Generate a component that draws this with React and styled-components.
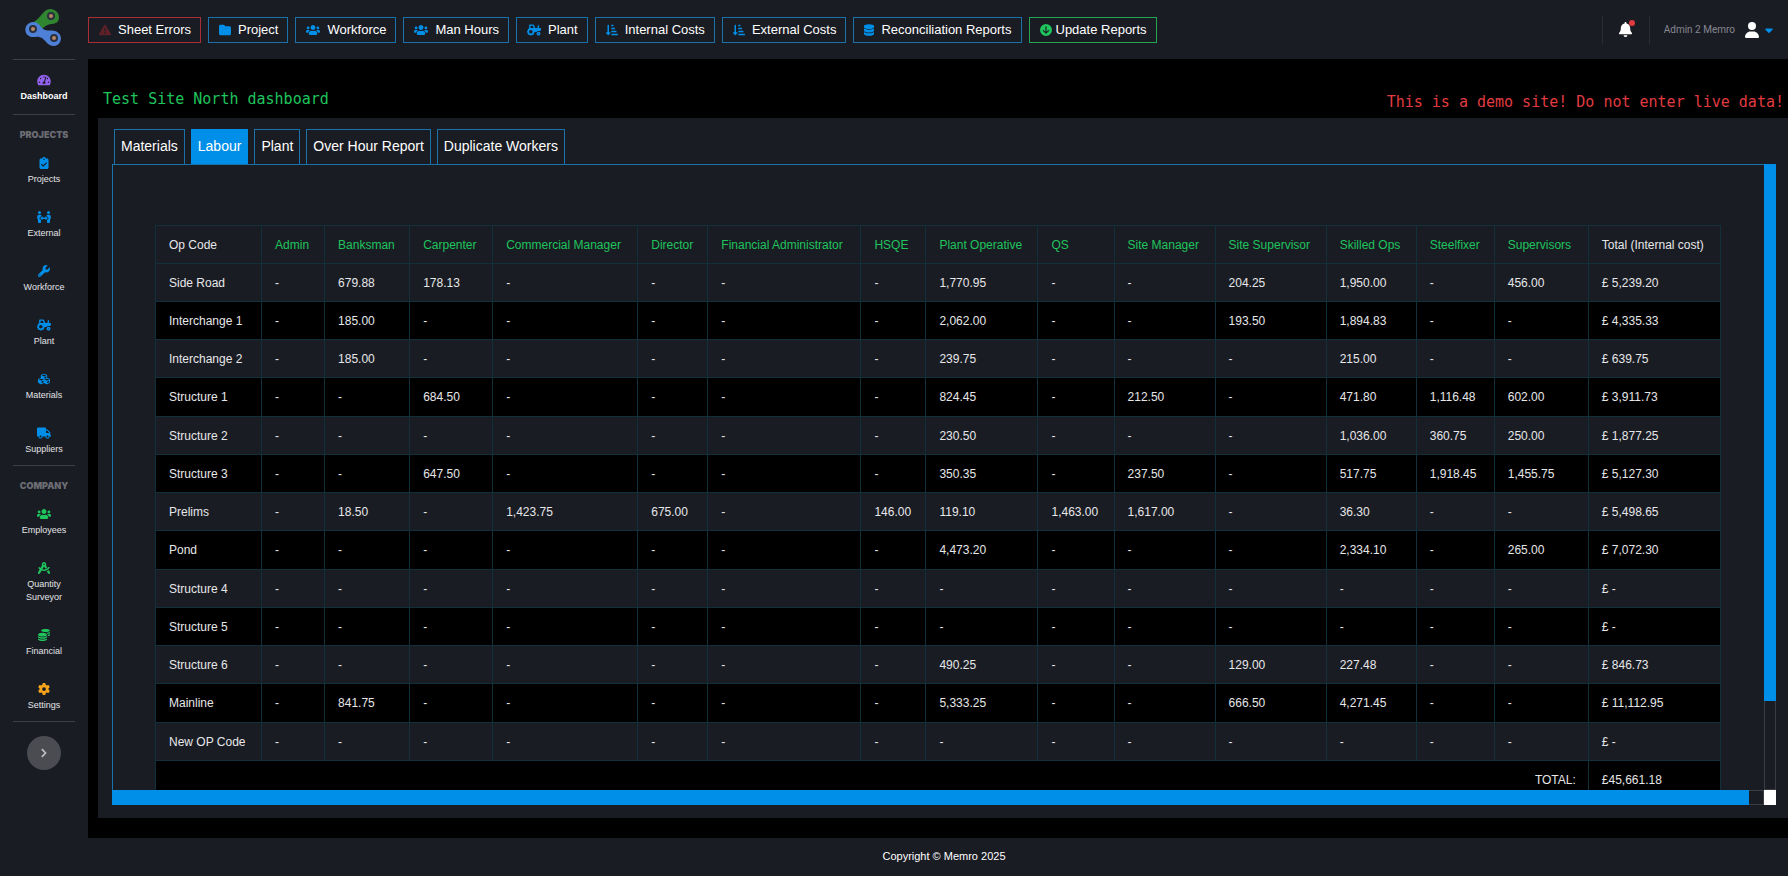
import React from "react";
import styled, { createGlobalStyle } from "styled-components";
import {
  FaTriangleExclamation, FaFolder, FaDatabase, FaCircleArrowDown, FaBell, FaUser, FaCaretDown,
  FaClipboardCheck, FaWrench, FaGear,
} from "react-icons/fa6";
import {
  FaUsers, FaTractor, FaSortAmountDownAlt, FaTachometerAlt, FaPeopleArrows, FaCubes, FaTruck,
  FaDraftingCompass, FaCoins, FaChevronRight,
} from "react-icons/fa";

const c = {
  bg: "#1a1c24",
  blue: "#008fe8",
  line: "#1b72ab",
  green: "#1fc45c",
  red: "#e13b41",
  grid: "#122f3c",
};

const GlobalStyle = createGlobalStyle`
  *, *::before, *::after { box-sizing: border-box; }
  body { margin: 0; background: ${c.bg}; color: #fff; font-family: "Liberation Sans", Arial, sans-serif; }
  a { color: inherit; text-decoration: none; }
  button { font: inherit; color: inherit; cursor: pointer; }
`;

const Shell = styled.div`
  display: flex;
  height: 100vh;
`;

const Sidebar = styled.aside`
  flex: none;
  width: 88px;
  display: flex;
  flex-direction: column;
  align-items: center;
`;

const Logo = styled.a`
  height: 59px;
  padding-top: 8px;
`;

const NavGroup = styled.nav`
  width: 62px;
  border-top: 1px solid #3d3f46;
  padding: ${(p) => p.$pad};
  display: flex;
  flex-direction: column;
  align-items: center;
  gap: 25px;
`;

const NavHeading = styled.h2`
  margin: 0 0 -9px;
  font: 900 9px/12px Inter, sans-serif;
  color: #6c6e74;
`;

const NavLink = styled.a`
  display: flex;
  flex-direction: column;
  align-items: center;
  gap: 4px;
  width: 62px;
  text-align: center;
  font-size: 9px;
  line-height: 13px;
  font-weight: ${(p) => (p.$active ? 700 : 400)};
  color: ${(p) => (p.$active ? "#fff" : "#e3e4e6")};
  svg { width: 14px; height: 12px; color: ${(p) => p.$tone}; }
`;

const Expand = styled.button`
  display: grid;
  place-items: center;
  width: 34px;
  height: 34px;
  margin-top: 14px;
  border: 0;
  border-radius: 50%;
  background: #4a4c52;
  color: #c2c3c6;
  font-size: 10px;
`;

const Column = styled.div`
  flex: 1;
  min-width: 0;
  display: flex;
  flex-direction: column;
`;

const Header = styled.header`
  flex: none;
  height: 59px;
  display: flex;
  align-items: center;
  justify-content: space-between;
  padding-right: 15px;
`;

const Toolbar = styled.div`
  display: flex;
  gap: 7px;
`;

const ToolButton = styled.button`
  display: flex;
  align-items: center;
  gap: ${(p) => p.$gap || 7}px;
  height: 26px;
  padding: 0 9px 0 10px;
  border: 1px solid ${(p) => p.$line || c.line};
  background: transparent;
  font-size: 13px;
  line-height: 16px;
  white-space: nowrap;
  svg { width: ${(p) => p.$icon || 12}px; height: 12px; color: ${(p) => p.$tone || c.blue}; }
`;

const Account = styled.div`
  display: flex;
  align-items: center;
`;

const Alerts = styled.button`
  position: relative;
  display: grid;
  place-items: center;
  width: 48px;
  height: 28px;
  padding: 0;
  border: solid #2b2d35;
  border-width: 0 1px;
  background: none;
  font-size: 15px;
`;

const AlertDot = styled.span`
  position: absolute;
  top: 4px;
  right: 14px;
  width: 6px;
  height: 6px;
  border-radius: 50%;
  background: ${c.red};
`;

const UserMenu = styled.button`
  display: flex;
  align-items: center;
  border: 0;
  background: none;
  padding: 0 0 0 14px;
  font: 10px/16px Roboto, sans-serif;
  color: #858790;
`;

const Avatar = styled(FaUser)`
  width: 14px;
  height: 16px;
  margin: 0 6px 0 10px;
  color: #fff;
`;

const Caret = styled(FaCaretDown)`
  width: 8px;
  height: 12px;
  color: ${c.blue};
`;

const Main = styled.main`
  flex: 1;
  min-height: 0;
  display: flex;
  flex-direction: column;
  background: #000;
  padding: 0 0 20px 10px;
`;

const Titles = styled.div`
  flex: none;
  height: 59px;
  display: flex;
  justify-content: space-between;
  align-items: center;
  padding: 20px 4px 0 5px;
  font: 15px/20px "DejaVu Sans Mono", monospace;
`;

const SiteTitle = styled.h1`
  margin: 0;
  font: inherit;
  color: ${c.green};
`;

const DemoNotice = styled.p`
  margin: 6px 0 0;
  color: ${c.red};
`;

const Panel = styled.section`
  flex: 1;
  min-height: 0;
  display: flex;
  flex-direction: column;
  background: ${c.bg};
  padding: 11px 12px 13px 14px;
`;

const Tabs = styled.div`
  flex: none;
  display: flex;
  gap: 6px;
  padding-left: 2px;
`;

const Tab = styled.button`
  height: 35px;
  padding: 0 6px 2px;
  border: 1px solid ${(p) => (p.$active ? c.blue : c.line)};
  border-bottom: 0;
  background: ${(p) => (p.$active ? c.blue : "transparent")};
  font-size: 14px;
  line-height: 16px;
  white-space: nowrap;
`;

const ScrollFrame = styled.div`
  flex: 1;
  min-height: 0;
  display: grid;
  grid-template: minmax(0, 1fr) 15px / minmax(0, 1fr) 12px;
`;

const ScrollBody = styled.div`
  overflow: auto;
  scrollbar-width: none;
  border: solid ${c.line};
  border-width: 1px 0 0 1px;
  padding: 60px 43px 20px 42px;
`;

const Track = styled.div`
  display: flex;
  flex-direction: ${(p) => (p.$vertical ? "column" : "row")};
  border: 1px solid #3c3d42;
  background: ${c.bg};
`;

const Thumb = styled.div`
  flex: none;
  flex-basis: ${(p) => p.$size};
  margin: -1px;
  background: ${c.blue};
`;

const Corner = styled.div`
  background: #fff;
`;

const Table = styled.table`
  width: 100%;
  table-layout: fixed;
  border-collapse: collapse;
  font-size: 12px;
  line-height: 16px;
  color: #e6e7e9;
  th, td {
    height: 38px;
    padding: 0 12px 0 13px;
    border: 1px solid ${c.grid};
    text-align: left;
    font-weight: 400;
    white-space: nowrap;
  }
  tbody tr:nth-child(even), tfoot tr { background: #000; }
  tbody tr:nth-child(4n) td { height: 39px; }
  tfoot th { text-align: right; }
`;

const HeadCell = styled.th`
  color: ${(p) => (p.$green ? c.green : "#e6e7e9")};
`;

const Footer = styled.footer`
  flex: none;
  height: 38px;
  display: grid;
  place-items: center;
  font-size: 11px;
  line-height: 16px;
  padding: 0 0 2px 12px;
`;

const columns = [
  ["Op Code", 106], ["Admin", 63], ["Banksman", 85], ["Carpenter", 83], ["Commercial Manager", 145],
  ["Director", 70], ["Financial Administrator", 153], ["HSQE", 65], ["Plant Operative", 112],
  ["QS", 76], ["Site Manager", 101], ["Site Supervisor", 111], ["Skilled Ops", 90],
  ["Steelfixer", 78], ["Supervisors", 94], ["Total (Internal cost)", 132],
];

/* Hours keyed by column index; a column without an entry shows a dash. */
const rows = [
  ["Side Road", { 2: "679.88", 3: "178.13", 8: "1,770.95", 11: "204.25", 12: "1,950.00", 14: "456.00" }, "5,239.20"],
  ["Interchange 1", { 2: "185.00", 8: "2,062.00", 11: "193.50", 12: "1,894.83" }, "4,335.33"],
  ["Interchange 2", { 2: "185.00", 8: "239.75", 12: "215.00" }, "639.75"],
  ["Structure 1", { 3: "684.50", 8: "824.45", 10: "212.50", 12: "471.80", 13: "1,116.48", 14: "602.00" }, "3,911.73"],
  ["Structure 2", { 8: "230.50", 12: "1,036.00", 13: "360.75", 14: "250.00" }, "1,877.25"],
  ["Structure 3", { 3: "647.50", 8: "350.35", 10: "237.50", 12: "517.75", 13: "1,918.45", 14: "1,455.75" }, "5,127.30"],
  ["Prelims", { 2: "18.50", 4: "1,423.75", 5: "675.00", 7: "146.00", 8: "119.10", 9: "1,463.00", 10: "1,617.00", 12: "36.30" }, "5,498.65"],
  ["Pond", { 8: "4,473.20", 12: "2,334.10", 14: "265.00" }, "7,072.30"],
  ["Structure 4", {}, "-"],
  ["Structure 5", {}, "-"],
  ["Structure 6", { 8: "490.25", 11: "129.00", 12: "227.48" }, "846.73"],
  ["Mainline", { 2: "841.75", 8: "5,333.25", 11: "666.50", 12: "4,271.45" }, "11,112.95"],
  ["New OP Code", {}, "-"],
];

const tools = [
  { label: "Sheet Errors", Icon: FaTriangleExclamation, line: "#a92f36", tone: "#5e2129" },
  { label: "Project", Icon: FaFolder },
  { label: "Workforce", Icon: FaUsers, icon: 14 },
  { label: "Man Hours", Icon: FaUsers, icon: 14 },
  { label: "Plant", Icon: FaTractor, icon: 14 },
  { label: "Internal Costs", Icon: FaSortAmountDownAlt },
  { label: "External Costs", Icon: FaSortAmountDownAlt },
  { label: "Reconciliation Reports", Icon: FaDatabase, icon: 10 },
  { label: "Update Reports", Icon: FaCircleArrowDown, line: "#22a653", tone: c.green, gap: 4 },
];

const projectLinks = [
  ["Projects", FaClipboardCheck], ["External", FaPeopleArrows], ["Workforce", FaWrench],
  ["Plant", FaTractor], ["Materials", FaCubes], ["Suppliers", FaTruck],
];

const companyLinks = [
  ["Employees", FaUsers, c.green], ["Quantity Surveyor", FaDraftingCompass, c.green],
  ["Financial", FaCoins, c.green], ["Settings", FaGear, "#f5a31c"],
];

const tabs = ["Materials", "Labour", "Plant", "Over Hour Report", "Duplicate Workers"];

function ChainLogo() {
  return (
    <svg width="38" height="38" viewBox="0 0 38 38" aria-hidden="true">
      <path d="M3 17C10 14 13 11 18 5C24-3 34 2 34 9C34 14 31 16 26 16C20 17 18 20 14 25Z" fill="#2f8530" />
      <path d="M8 14C15 14 15 20 20 22C24 23 26 22 30 23C39 26 37 37 29 38C23 38 21 33 17 30C13 28 11 29 7 29C-2 28-2 15 8 14Z" fill="#4d80d6" />
      {[[26, 8], [8, 21], [29, 30]].map(([x, y]) => (
        <circle key={x} cx={x} cy={y} r="3" fill="#b98763" stroke="#29303f" strokeWidth="2" />
      ))}
    </svg>
  );
}

export default function App() {
  return (
    <>
      <GlobalStyle />
      <Shell>
        <Sidebar>
          <Logo href="#" aria-label="Home"><ChainLogo /></Logo>
          <NavGroup $pad="14px 0 11px">
            <NavLink href="#" $active $tone="#9362ee"><FaTachometerAlt />Dashboard</NavLink>
          </NavGroup>
          <NavGroup $pad="14px 0 9px">
            <NavHeading>PROJECTS</NavHeading>
            {projectLinks.map(([label, Icon]) => (
              <NavLink href="#" key={label} $tone={c.blue}><Icon />{label}</NavLink>
            ))}
          </NavGroup>
          <NavGroup $pad="14px 0 9px">
            <NavHeading>COMPANY</NavHeading>
            {companyLinks.map(([label, Icon, tone]) => (
              <NavLink href="#" key={label} $tone={tone}><Icon />{label}</NavLink>
            ))}
          </NavGroup>
          <NavGroup as="div" $pad="0">
            <Expand aria-label="Expand menu"><FaChevronRight /></Expand>
          </NavGroup>
        </Sidebar>
        <Column>
          <Header>
            <Toolbar>
              {tools.map(({ label, Icon, line, tone, gap, icon }) => (
                <ToolButton key={label} $line={line} $tone={tone} $gap={gap} $icon={icon}>
                  <Icon />{label}
                </ToolButton>
              ))}
            </Toolbar>
            <Account>
              <Alerts aria-label="Notifications"><FaBell /><AlertDot /></Alerts>
              <UserMenu>Admin 2 Memro<Avatar /><Caret /></UserMenu>
            </Account>
          </Header>
          <Main>
            <Titles>
              <SiteTitle>Test Site North dashboard</SiteTitle>
              <DemoNotice>This is a demo site! Do not enter live data!</DemoNotice>
            </Titles>
            <Panel>
              <Tabs role="tablist">
                {tabs.map((t) => (
                  <Tab key={t} role="tab" aria-selected={t === "Labour"} $active={t === "Labour"}>{t}</Tab>
                ))}
              </Tabs>
              <ScrollFrame>
                <ScrollBody>
                  <Table>
                    <colgroup>
                      {columns.map(([name, width]) => <col key={name} width={width} />)}
                    </colgroup>
                    <thead>
                      <tr>
                        {columns.map(([name], i) => (
                          <HeadCell key={name} scope="col" $green={i > 0 && i < 15}>{name}</HeadCell>
                        ))}
                      </tr>
                    </thead>
                    <tbody>
                      {rows.map(([name, hours, total]) => (
                        <tr key={name}>
                          <th scope="row">{name}</th>
                          {columns.slice(1, 15).map(([col], i) => <td key={col}>{hours[i + 1] || "-"}</td>)}
                          <td>£ {total}</td>
                        </tr>
                      ))}
                    </tbody>
                    <tfoot>
                      <tr><th scope="row" colSpan={15}>TOTAL:</th><td>£45,661.18</td></tr>
                    </tfoot>
                  </Table>
                </ScrollBody>
                <Track $vertical><Thumb $size="86%" /></Track>
                <Track><Thumb $size="99.2%" /></Track>
                <Corner />
              </ScrollFrame>
            </Panel>
          </Main>
          <Footer>Copyright © Memro 2025</Footer>
        </Column>
      </Shell>
    </>
  );
}
